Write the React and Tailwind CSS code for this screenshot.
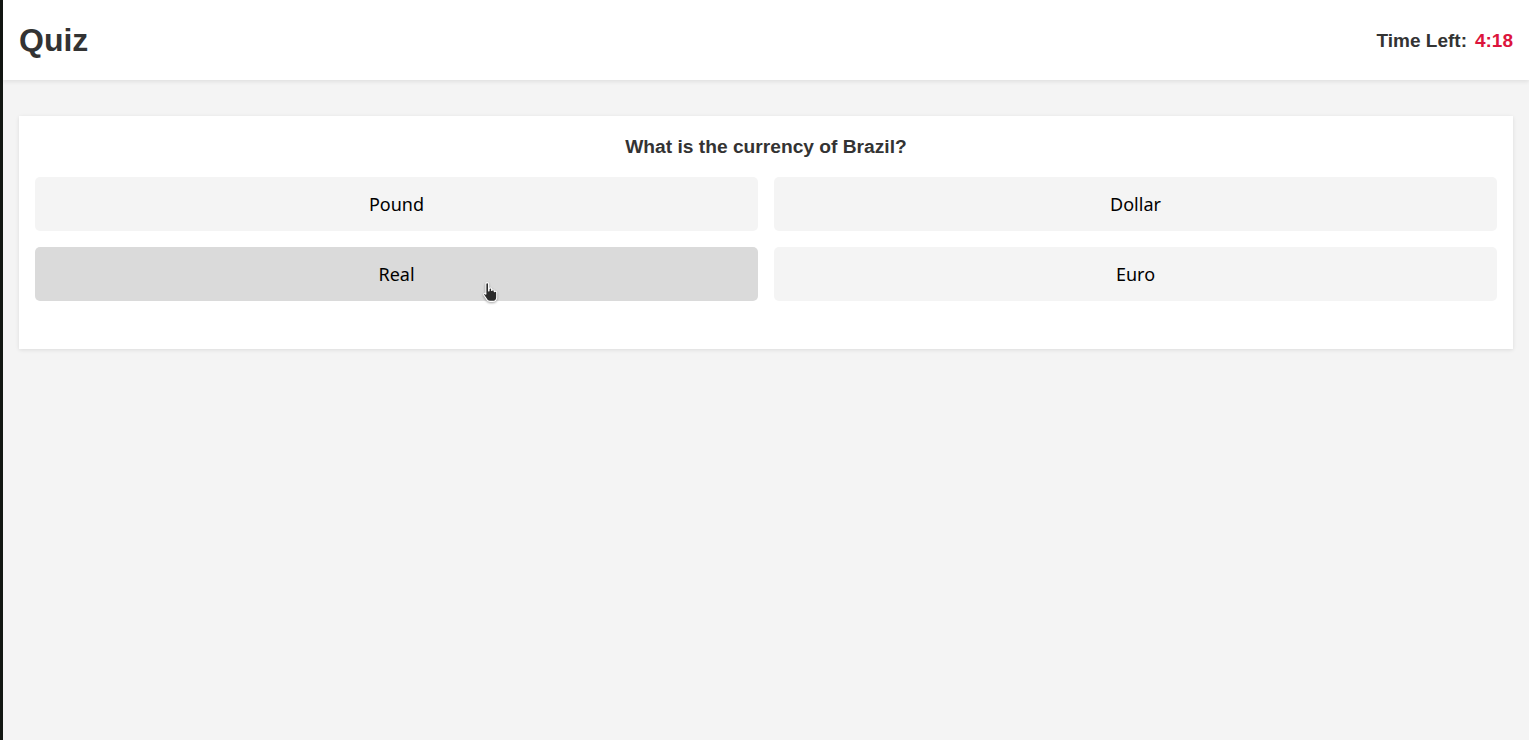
import React from 'react'

const answers = ['Pound', 'Dollar', 'Real', 'Euro']

// small pointer-hand cursor, as seen over the hovered answer
function HandCursor() {
  return (
    <svg width="20" height="22" viewBox="0 0 16 20" className="pointer-events-none absolute left-[446px] top-[34px] drop-shadow-[0_1px_1px_rgba(0,0,0,0.35)]">
      <path
        d="M4.5 1.5c.8 0 1.3.6 1.3 1.3v6.2l.4-.1V7.5c0-.7.5-1.2 1.2-1.2s1.2.5 1.2 1.2v1.6c.1-.7.6-1.1 1.2-1.1.7 0 1.2.5 1.2 1.2v.9c.2-.5.6-.8 1.1-.8.7 0 1.1.5 1.1 1.2v4.2c0 2.2-1.6 3.8-3.8 3.8H7.1c-1.2 0-2-.5-2.7-1.4L1.6 13c-.4-.6-.3-1.3.2-1.6.5-.4 1.2-.2 1.6.3l-.1.1V2.8c0-.7.5-1.3 1.2-1.3z"
        fill="#2b2b2b"
        stroke="#fff"
        strokeWidth="1"
      />
    </svg>
  )
}

export default function App() {
  return (
    <div className="flex min-h-screen font-['Liberation_Sans',Arial,sans-serif]">
      {/* desktop edge peeking in on the left */}
      <div className="w-[3px] shrink-0 bg-[#131713]" />

      <div className="flex-1 bg-[#f4f4f4]">
        {/* Header */}
        <header className="flex h-20 items-center justify-between bg-white px-4 shadow-[0_2px_4px_rgba(0,0,0,0.08)]">
          <h1 className="text-[32px] font-bold leading-none text-[#333]">Quiz</h1>
          <div className="flex items-center gap-[8px] pt-[2px] text-[19px] font-bold text-[#333]">
            <span>Time Left:</span>
            <span className="text-[#dc143c]">4:18</span>
          </div>
        </header>

        {/* Question card */}
        <main className="px-4 pt-9">
          <div className="bg-white px-4 pt-[20px] pb-12 shadow-[0_1px_4px_rgba(0,0,0,0.1)]">
            <h2 className="mb-[20px] text-center text-[19.2px] font-bold leading-[21px] text-[#333]">
              What is the currency of Brazil?
            </h2>
            <div className="grid grid-cols-2 gap-4">
              {answers.map((a) => (
                <button
                  key={a}
                  className={`relative h-[54px] rounded-[5px] font-['Noto_Sans',sans-serif] text-[18px] text-black ${
                    a === 'Real' ? 'bg-[#dadada]' : 'bg-[#f4f4f4]'
                  }`}
                >
                  {a}
                  {a === 'Real' && <HandCursor />}
                </button>
              ))}
            </div>
          </div>
        </main>
      </div>
    </div>
  )
}
